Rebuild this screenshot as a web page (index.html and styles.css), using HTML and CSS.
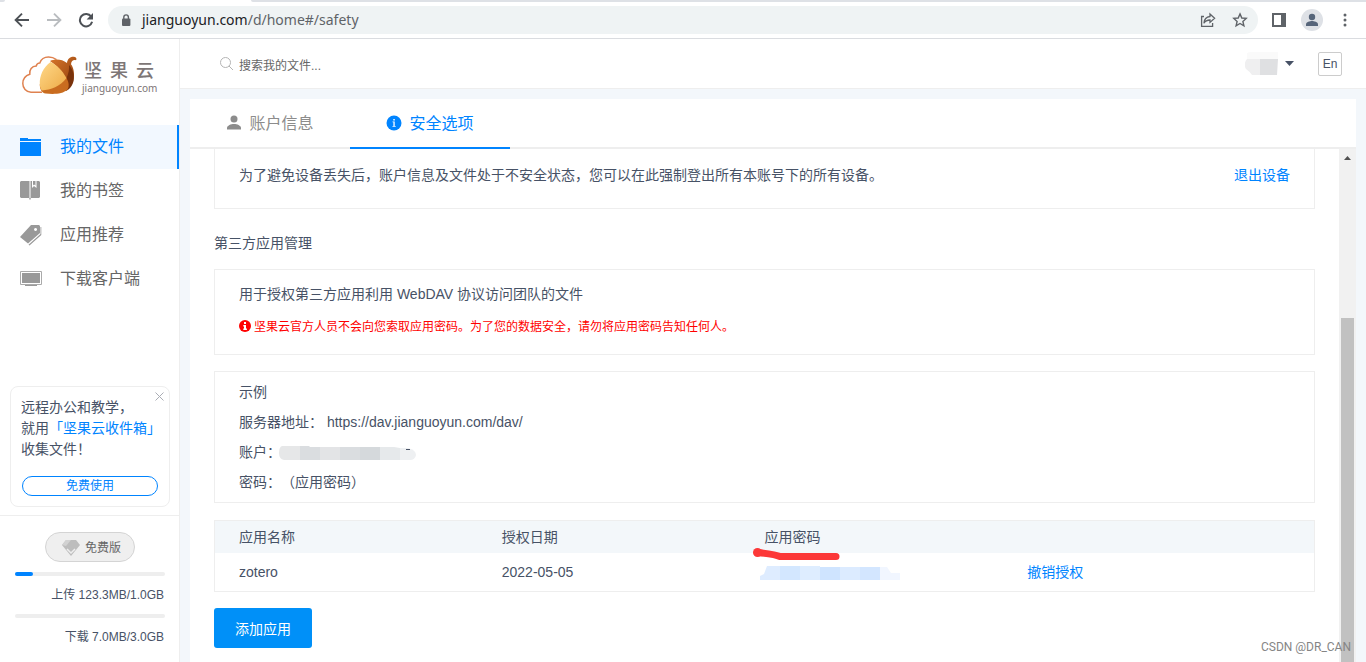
FILE: index.html
```html
<!DOCTYPE html>
<html lang="zh-CN">
<head>
<meta charset="utf-8">
<title>坚果云</title>
<link rel="stylesheet" href="styles.css">
</head>
<body>
<div class="window">
  <div class="tabstrip"><div class="tab-edge"></div><div class="tab-current"></div><div class="tab-rest"></div></div>
  <div class="browser-bar">
    <button class="icon-btn" aria-label="后退"><svg width="16" height="16" viewBox="0 0 16 16" fill="none" stroke="#4d5156" stroke-width="1.9"><path d="M15 8H2M8 1.6L1.6 8 8 14.4"/></svg></button>
    <button class="icon-btn" aria-label="前进"><svg width="16" height="16" viewBox="0 0 16 16" fill="none" stroke="#b9bcbf" stroke-width="1.9"><path d="M1 8h13M8 1.6L14.4 8 8 14.4"/></svg></button>
    <button class="icon-btn" aria-label="刷新"><svg width="16" height="16" viewBox="0 0 16 16"><path d="M13.2 4.6A6.2 6.2 0 1 0 14.1 9.8" fill="none" stroke="#4d5156" stroke-width="2"/><path d="M15 1v6.4H8.6z" fill="#4d5156"/></svg></button>
    <div class="address">
      <svg width="10" height="13" viewBox="0 0 10 13"><rect x="1" y="4.5" width="8.4" height="7.5" rx="1" fill="#5f6368"/><path d="M2.8 5V3.2a2.3 2.3 0 0 1 4.6 0V5" fill="none" stroke="#5f6368" stroke-width="1.4"/></svg>
      <span class="url"><b>jianguoyun.com</b>/d/home#/safety</span>
      <button class="icon-btn" aria-label="分享"><svg width="16" height="16" viewBox="0 0 16 16" fill="none" stroke="#5f6368" stroke-width="1.3"><path d="M4 4.5H1.6v9.9h11V11"/><path d="M10 2l4.6 4.2L10 10.4V8C7 8 5.200 9 3.900 11.200 4.200 7.600 6.400 4.900 10 4.500z"/></svg></button>
      <button class="icon-btn" aria-label="收藏"><svg width="16" height="16" viewBox="0 0 16 16" fill="none" stroke="#5f6368" stroke-width="1.400"><path d="M8 1.900l1.800 4.100 4.400.4-3.300 3 1 4.400L8 11.500l-3.900 2.300 1-4.400-3.300-3 4.400-.4z"/></svg></button>
    </div>
    <div class="chrome-actions">
      <button class="icon-btn" aria-label="侧边栏"><svg width="14" height="14" viewBox="0 0 14 14"><path d="M0 0h14v14H0zM2 2v10h7V2z" fill="#5f6368" fill-rule="evenodd"/></svg></button>
      <button aria-label="用户"><svg width="22" height="22" viewBox="0 0 22 22"><circle cx="11" cy="11" r="11" fill="#dee1e6"/><circle cx="11" cy="8" r="3.200" fill="#56657a"/><path d="M5 17v-1.800c0-2 4-3.100 6-3.100s6 1.100 6 3.100V17z" fill="#56657a"/></svg></button>
      <button class="icon-btn" aria-label="菜单"><svg width="4" height="14" viewBox="0 0 4 14" fill="#5f6368"><circle cx="2" cy="2" r="1.500"/><circle cx="2" cy="7" r="1.500"/><circle cx="2" cy="12" r="1.500"/></svg></button>
    </div>
  </div>

  <div class="app">
    <aside class="sidebar">
      <a class="logo" href="#">
        <svg width="56" height="40" viewBox="0 0 56 40">
          <defs>
            <linearGradient id="nut" x1="0" y1="0" x2="1" y2="1"><stop offset="0" stop-color="#ffd98a"/><stop offset="1" stop-color="#edaa45"/></linearGradient>
            <linearGradient id="cap" x1="0" y1="0" x2="1" y2="1"><stop offset="0" stop-color="#d8762a"/><stop offset="1" stop-color="#8c3d0c"/></linearGradient>
          </defs>
          <path d="M21 37.300H10C5 37 1.800 33 1.800 28.500c0-4.500 2.900-8 7-9.300-.6-4.500 2-8 6.400-8.200.5-2 1.900-3 3.600-3C20 4.500 23.500 2 27.500 2c3 0 5.500.8 8 2.500" fill="none" stroke="#df8250" stroke-width="1.500"/>
          <path d="M29 6c5-2.500 12-2 17 2 .5-4 3-6.500 7-6.200 2.500.3 3 2.300 2 3.400-2.700-.7-4.600.6-5 4C53 13 54 20 52 27L46 34C47 22 38 12 29 6z" fill="url(#cap)"/>
          <path d="M45.500 23c2-4 3-9 2.500-13 4.500 5 6 12 4 18-1.500 4-4 6.500-7 8z" fill="#79320b"/>
          <path d="M18.800 29c-.2 5 1.800 9 5.800 9.500 8 .9 17 .7 22-4 1.800-3 1.500-7-1.100-11.500z" fill="#c96c1f"/>
          <path d="M29.500 7C22 12.500 18.500 21 18.800 29c0 3 .8 5 2 6.500C30 34.800 39 31.500 45.500 23 41 15 36 10 29.500 7z" fill="url(#nut)"/>
        </svg>
        <span class="logo-text"><span class="logo-cn"><span>坚</span><span>果</span><span>云</span></span><span class="logo-en">jianguoyun.com</span></span>
      </a>
      <nav class="nav">
        <a class="nav-item active" href="#"><svg width="22" height="22" viewBox="0 0 22 22" fill="#0084ff"><path d="M0 2h8v1h13v2H0zM0 6h21v14H0z"/></svg><span>我的文件</span></a>
        <a class="nav-item" href="#"><svg width="22" height="22" viewBox="0 0 22 22" fill="#999"><path d="M1 1h8.500v17H1l-1-1V2zM10.500 1H12v7l2-2 2.500 2V1H19l1 1v15l-1 1h-8.500zM9.300 18h1.400v1.500H9.300z"/><path d="M13 1h2.500v4.500L14 4.500l-1 1z"/></svg><span>我的书签</span></a>
        <a class="nav-item" href="#"><svg width="22" height="22" viewBox="0 0 22 22" fill="#999"><path fill-rule="evenodd" d="M11 1h8l1 1v7L8 19.500 0 13zM15.500 4a1.500 1.500 0 1 0 .1 0z"/><path d="M20.500 3h.8v8L9.500 21.500l-1-.7L20.500 10z"/></svg><span>应用推荐</span></a>
        <a class="nav-item" href="#"><svg width="22" height="22" viewBox="0 0 22 22"><path d="M.5 3.500h21v13H.5z" fill="none" stroke="#aaa"/><path d="M2 5h18v10H2zM5 17h12v1H5z" fill="#999"/></svg><span>下载客户端</span></a>
      </nav>
      <section class="promo">
        <button class="close" aria-label="关闭"><svg width="9" height="9" viewBox="0 0 9 9" stroke="#aaadb5"><path d="M.5.5l8 8M8.500.5l-8 8"/></svg></button>
        <p>远程办公和教学，<br>就用<a href="#">「坚果云收件箱」</a><br>收集文件！</p>
        <button class="promo-btn">免费使用</button>
      </section>
      <section class="usage">
        <button class="plan"><svg width="18" height="16" viewBox="0 0 18 16"><path d="M4 0h10l4 5-9 11L0 5z" fill="#bdbdbd"/><path d="M4 0h5L4 6 0 5z" fill="#d2d2d2"/><path d="M5 9l4 4 4-4" fill="none" stroke="#eee" stroke-width="1.500"/></svg>免费版</button>
        <div class="meter"><div class="meter-fill"></div></div>
        <p class="amount">上传 123.3MB/1.0GB</p>
        <div class="meter"></div>
        <p class="amount">下载 7.0MB/3.0GB</p>
      </section>
    </aside>

    <main class="main">
      <header class="header">
        <label class="search"><svg width="14" height="14" viewBox="0 0 14 14" fill="none" stroke="#b4b4b4"><circle cx="5.500" cy="5.500" r="5"/><path d="M9 9l4 4"/></svg><input type="text" placeholder="搜索我的文件..." aria-label="搜索我的文件"></label>
        <button class="account" aria-label="账户"><svg width="33" height="24" viewBox="0 0 33 24"><path d="M2 1q2-1 5-1h26v7H2z" fill="#fafafa"/><path d="M2 7h13v16H7Q4 19 1 17-2 12 2 7z" fill="#efeff0"/><path d="M15 7h18l-1 16H15z" fill="#dfe0e2"/></svg><svg width="9" height="5" viewBox="0 0 9 5"><path d="M0 0h9L4.500 5z" fill="#475266"/></svg></button>
        <button class="lang">En</button>
      </header>
      <div class="panel">
        <div class="tabs">
          <a class="tab" href="#"><svg width="16" height="16" viewBox="0 0 16 16" fill="#8c8c8c"><circle cx="8" cy="4" r="3.500"/><path d="M1 14.500V13c0-2.500 4-4 7-4s7 1.500 7 4v1.500z"/></svg><span>账户信息</span></a>
          <a class="tab selected" href="#"><svg width="16" height="16" viewBox="0 0 16 16"><circle cx="8" cy="8" r="7.500" fill="#0084ff"/><path d="M7.300 4h1.500v1.400H7.300zM6.500 6.500h2.200v4.500h1v.8H6.500V11h.9V7.300h-.9z" fill="#fff"/></svg><span>安全选项</span></a>
        </div>
        <div class="scroller">
          <div class="content">
            <section class="box devices"><p>为了避免设备丢失后，账户信息及文件处于不安全状态，您可以在此强制登出所有本账号下的所有设备。</p><a href="#">退出设备</a></section>
            <h2 class="title">第三方应用管理</h2>
            <section class="box notice">
              <p>用于授权第三方应用利用 WebDAV 协议访问团队的文件</p>
              <p class="warning"><svg width="12" height="12" viewBox="0 0 12 12"><circle cx="6" cy="6" r="6" fill="red"/><path d="M5 2h2v2H5zM4.300 5H7v3.500h.9V10H4.300V8.500H5v-2h-.7z" fill="#fff"/></svg><span>坚果云官方人员不会向您索取应用密码。为了您的数据安全，请勿将应用密码告知任何人。</span></p>
            </section>
            <section class="box example">
              <p>示例</p>
              <p>服务器地址： https://dav.jianguoyun.com/dav/</p>
              <p class="masked">账户：<svg width="137" height="16" viewBox="0 0 137 16"><path d="M3 1h18v14H5Q0 14 0 8 0 2 3 1z" fill="#e6e7e8"/><path d="M21 1h9l1 1h10v13H21z" fill="#dadde0"/><path d="M41 2h20v13H41z" fill="#e3e4e6"/><path d="M61 2h20v13H61z" fill="#dadde0"/><path d="M81 2h20v13H81z" fill="#d5d9dc"/><path d="M101 2h14l6 1v12h-20z" fill="#e6e9eb"/><path d="M121 3h8q8 2 8 7-1 5-6 5h-10z" fill="#eef0f2"/><path d="M127 4.500h4" stroke="#475266"/></svg></p>
              <p>密码：（应用密码）</p>
            </section>
            <table class="apps">
              <thead><tr><th>应用名称</th><th>授权日期</th><th class="marked">应用密码<svg class="mark" width="90" height="13" viewBox="0 0 90 13"><path d="M5 4.500q18 2 22 4h56" fill="none" stroke="#fc3838" stroke-width="7" stroke-linecap="round" stroke-linejoin="round"/><circle cx="4.500" cy="4.500" r="4.500" fill="#fc3838"/></svg></th><th></th></tr></thead>
              <tbody><tr><td>zotero</td><td>2022-05-05</td><td><svg class="hidden-key" width="150" height="16" viewBox="0 0 150 16"><path d="M7 2h13v14H0v-4l4-2z" fill="#deecff"/><path d="M20 2h20v14H20z" fill="#d3e7ff"/><path d="M40 2h20v14H40z" fill="#deedff"/><path d="M60 3h20v13H60z" fill="#cfe4ff"/><path d="M80 3h20v13H80z" fill="#dcebff"/><path d="M100 3h20v13h-20z" fill="#d3e6ff"/><path d="M120 3h7l4 6h9v7h-20z" fill="#f1f6ff"/></svg></td><td><a href="#">撤销授权</a></td></tr></tbody>
            </table>
            <button class="add">添加应用</button>
          </div>
          <div class="scrollbar"><svg width="7" height="4" viewBox="0 0 7 4"><path d="M3.500 0L7 4H0z" fill="#505050"/></svg><div class="thumb"></div></div>
        </div>
      </div>
    </main>
  </div>
  <div class="watermark">CSDN @DR_CAN</div>
</div>
</body>
</html>
```

FILE: styles.css
```css
* { box-sizing: border-box; }
body {
  margin: 0;
  color: #475266;
  font: 14px/20px "Liberation Sans", "Noto Sans CJK SC", sans-serif;
  text-spacing-trim: space-all;
}
p, h2 { margin: 0; font-size: inherit; font-weight: normal; }
a { color: #0084ff; text-decoration: none; }
button { margin: 0; padding: 0; border: 0; background: none; color: inherit; font: inherit; }
svg { display: block; flex: none; }

.window { position: relative; display: flex; flex-direction: column; height: 100vh; overflow: hidden; background: #fff; }

/* browser chrome */
.tabstrip { display: flex; height: 2px; flex: none; }
.tab-edge { width: 5px; background: #dee1e6; border-bottom-right-radius: 2px; }
.tab-current { width: 246px; }
.tab-rest { flex: 1; background: #dee1e6; border-bottom-left-radius: 2px; }
.browser-bar { display: flex; align-items: center; flex: none; height: 37px; padding: 0 13px 0 14px; gap: 16px; border-bottom: 1px solid #dadce0; }
.icon-btn { display: flex; justify-content: center; min-width: 16px; }
.address { display: flex; align-items: center; flex: 1; height: 28px; margin: 0 -3px 0 -2px; padding: 0 10px 0 13px; border-radius: 14px; background: #eff3f4; gap: 16px; }
.address .url { flex: 1; margin-left: -5px; color: #5f6368; font: 14px/20px "Noto Sans", sans-serif; }
.url b { color: #202124; font-weight: normal; }
.chrome-actions { display: flex; align-items: center; gap: 14px; }

/* sidebar */
.app { display: flex; flex: 1; min-height: 0; }
.sidebar { display: flex; flex-direction: column; flex: none; width: 180px; border-right: 1px solid #eee; }
.logo { display: flex; flex: none; height: 86px; padding: 16px 0 0 21px; gap: 5px; color: #7d7676; }
.logo-text { display: flex; flex-direction: column; width: 75px; padding-top: 5px; }
.logo-cn { display: flex; padding: 0 3px 0 2px; justify-content: space-between; font-size: 18px; line-height: 22px; font-weight: 500; }
.logo-en { font: 10px/12px "Noto Sans", sans-serif; }
.nav-item { display: flex; align-items: center; height: 44px; padding-left: 20px; gap: 18px; color: #666; font-size: 16px; }
.nav-item.active { border-right: 2px solid #0084ff; background: #f2f8ff; color: #0084ff; }
.promo { position: relative; margin: auto 9px 8px 10px; padding: 10px; border: 1px solid #eee; border-radius: 8px; line-height: 21px; white-space: nowrap; }
.close { position: absolute; top: 5px; right: 5px; }
.promo-btn { display: block; width: calc(100% - 2px); height: 20px; margin: 16px 1px 0; border: 1px solid #0084ff; border-radius: 10px; color: #0084ff; font-size: 12px; line-height: 18px; }
.usage { display: flex; flex-direction: column; padding: 16px 14px 15px 15px; border-top: 1px solid #eee; font-size: 12px; }
.plan { display: flex; align-items: center; align-self: center; height: 30px; padding: 1px 13px 0 16px; gap: 5px; border: 1px solid #d4d4d4; border-radius: 15px; background: #efefef; color: #666; }
.meter { height: 4px; border-radius: 2px; background: #eee; }
.plan + .meter { margin-top: 10px; }
.meter-fill { width: 12%; height: 4px; border-radius: 2px; background: #0084ff; }
.amount { padding: 9px 1px 9px 0; text-align: right; }
.amount:last-child { padding-bottom: 0; }

/* header */
.main { display: flex; flex-direction: column; flex: 1; min-width: 0; background: #f3f7fb; }
.header { display: flex; align-items: center; flex: none; height: 50px; padding: 0 24px 0 40px; border-bottom: 1px solid #eee; background: #fff; }
.search { display: flex; align-items: center; flex: 1; gap: 5px; }
.search input { flex: 1; padding: 4px 0 0; border: 0; outline: 0; font: inherit; font-size: 12px; }
.search input::placeholder { color: #666; opacity: 1; }
.account { display: flex; align-items: center; gap: 7px; }
.lang { width: 24px; height: 24px; margin-left: 24px; padding-top: 1px; border: 1px solid #ccc; border-radius: 2px; font-size: 12px; }

/* safety panel */
.panel { display: flex; flex-direction: column; flex: 1; min-height: 0; margin: 10px 10px 0; background: #fff; }
.tabs { display: flex; flex: none; height: 50px; box-shadow: inset 0 -2px #eee; }
.tab { display: flex; align-items: center; justify-content: center; width: 160px; gap: 7px; border-bottom: 2px solid transparent; color: #8c8c8c; font-size: 16px; }
.tab span { padding-top: 2px; }
.tab.selected { border-color: #0084ff; color: #0084ff; }
.scroller { display: flex; flex: 1; min-height: 0; }
.content { flex: 1; padding: 0 24px; overflow: hidden; }
.box { padding: 14px 24px; border: 1px solid #eee; }
.devices { display: flex; justify-content: space-between; padding: 16px 24px 23px; border-top: 0; }
.title { padding: 24px 0 16px; }
.notice { padding-bottom: 17px; }
.warning { display: flex; align-items: center; margin-top: 11px; gap: 3px; color: red; font-size: 12px; }
.warning span { padding-top: 2px; }
.example { margin: 16px 0 17px; padding: 5px 24px; line-height: 30px; }
.masked { display: flex; align-items: center; }
.masked svg { margin: 2px 0 0 -2px; }
.apps { display: block; border: 1px solid #eee; }
.apps thead, .apps tbody { display: block; }
.apps tr { display: grid; grid-template-columns: repeat(4, 1fr); padding: 0 24px; }
.apps th, .apps td { display: flex; align-items: center; height: 38px; padding: 0; font-weight: normal; }
.apps th { height: 32px; }
.apps thead { background: #f3f7fa; }
.marked { position: relative; }
.mark { position: absolute; top: 27px; left: -12px; }
.hidden-key { margin-left: -5px; }
.add { width: 98px; height: 40px; margin-top: 16px; padding-top: 2px; border-radius: 3px; background: #0090f8; color: #fff; }
.scrollbar { display: flex; flex-direction: column; align-items: center; width: 17px; padding-top: 7px; background: #f1f1f1; }
.thumb { flex: 1; width: 13px; margin-top: 158px; background: #c1c1c1; }

.watermark { position: absolute; right: 15px; bottom: 6px; color: #858585; font: 12px/18px Roboto, sans-serif; }
```
